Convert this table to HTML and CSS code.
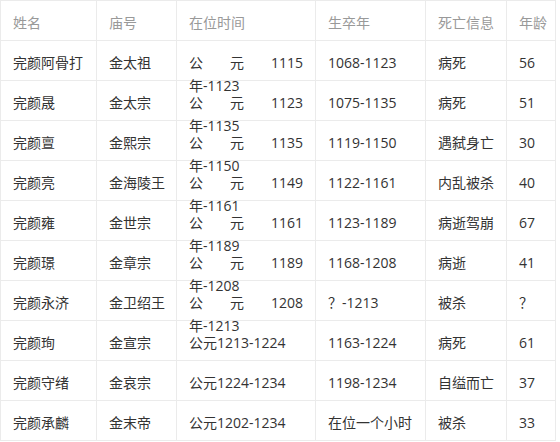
FILE: index.html
```html
<!DOCTYPE html>
<html lang="zh-CN">
<head>
<meta charset="utf-8">
<title>金朝皇帝</title>
<link rel="stylesheet" href="styles.css">
</head>
<body>
<div class="table">
  <div class="row head">
    <div class="cell">姓名</div>
    <div class="cell">庙号</div>
    <div class="cell">在位时间</div>
    <div class="cell">生卒年</div>
    <div class="cell">死亡信息</div>
    <div class="cell">年龄</div>
  </div>
  <div class="row">
    <div class="cell">完颜阿骨打</div>
    <div class="cell">金太祖</div>
    <div class="cell"><div class="just"><span>公</span><span>元</span><span>1115</span></div><div>年-1123</div></div>
    <div class="cell">1068-1123</div>
    <div class="cell">病死</div>
    <div class="cell">56</div>
  </div>
  <div class="row">
    <div class="cell">完颜晟</div>
    <div class="cell">金太宗</div>
    <div class="cell"><div class="just"><span>公</span><span>元</span><span>1123</span></div><div>年-1135</div></div>
    <div class="cell">1075-1135</div>
    <div class="cell">病死</div>
    <div class="cell">51</div>
  </div>
  <div class="row">
    <div class="cell">完颜亶</div>
    <div class="cell">金熙宗</div>
    <div class="cell"><div class="just"><span>公</span><span>元</span><span>1135</span></div><div>年-1150</div></div>
    <div class="cell">1119-1150</div>
    <div class="cell">遇弑身亡</div>
    <div class="cell">30</div>
  </div>
  <div class="row">
    <div class="cell">完颜亮</div>
    <div class="cell">金海陵王</div>
    <div class="cell"><div class="just"><span>公</span><span>元</span><span>1149</span></div><div>年-1161</div></div>
    <div class="cell">1122-1161</div>
    <div class="cell">内乱被杀</div>
    <div class="cell">40</div>
  </div>
  <div class="row">
    <div class="cell">完颜雍</div>
    <div class="cell">金世宗</div>
    <div class="cell"><div class="just"><span>公</span><span>元</span><span>1161</span></div><div>年-1189</div></div>
    <div class="cell">1123-1189</div>
    <div class="cell">病逝驾崩</div>
    <div class="cell">67</div>
  </div>
  <div class="row">
    <div class="cell">完颜璟</div>
    <div class="cell">金章宗</div>
    <div class="cell"><div class="just"><span>公</span><span>元</span><span>1189</span></div><div>年-1208</div></div>
    <div class="cell">1168-1208</div>
    <div class="cell">病逝</div>
    <div class="cell">41</div>
  </div>
  <div class="row">
    <div class="cell">完颜永济</div>
    <div class="cell">金卫绍王</div>
    <div class="cell"><div class="just"><span>公</span><span>元</span><span>1208</span></div><div>年-1213</div></div>
    <div class="cell">？-1213</div>
    <div class="cell">被杀</div>
    <div class="cell">？</div>
  </div>
  <div class="row">
    <div class="cell">完颜珣</div>
    <div class="cell">金宣宗</div>
    <div class="cell">公元1213-1224</div>
    <div class="cell">1163-1224</div>
    <div class="cell">病死</div>
    <div class="cell">61</div>
  </div>
  <div class="row">
    <div class="cell">完颜守绪</div>
    <div class="cell">金哀宗</div>
    <div class="cell">公元1224-1234</div>
    <div class="cell">1198-1234</div>
    <div class="cell">自缢而亡</div>
    <div class="cell">37</div>
  </div>
  <div class="row">
    <div class="cell">完颜承麟</div>
    <div class="cell">金末帝</div>
    <div class="cell">公元1202-1234</div>
    <div class="cell">在位一个小时</div>
    <div class="cell">被杀</div>
    <div class="cell">33</div>
  </div>
</div>
</body>
</html>
```

FILE: styles.css
```css
html, body {
  margin: 0;
  padding: 0;
  background: #ffffff;
}

body {
  font-family: "Open Sans", "Noto Sans CJK SC", sans-serif;
  font-size: 14px;
  color: #333333;
}

.table {
  width: max-content;
  border-left: 1px solid #ebebeb;
  border-top: 1px solid #ebebeb;
}

.row {
  display: grid;
  grid-template-columns: 96px 80px 139px 110px 81px 49px;
  height: 40px;
}

.cell {
  box-sizing: border-box;
  height: 40px;
  padding: 10px 12px 0;
  line-height: 23px;
  white-space: nowrap;
  border-right: 1px solid #ebebeb;
  border-bottom: 1px solid #ebebeb;
}

.head .cell {
  color: #999999;
}

.just {
  display: flex;
  justify-content: space-between;
}
```
